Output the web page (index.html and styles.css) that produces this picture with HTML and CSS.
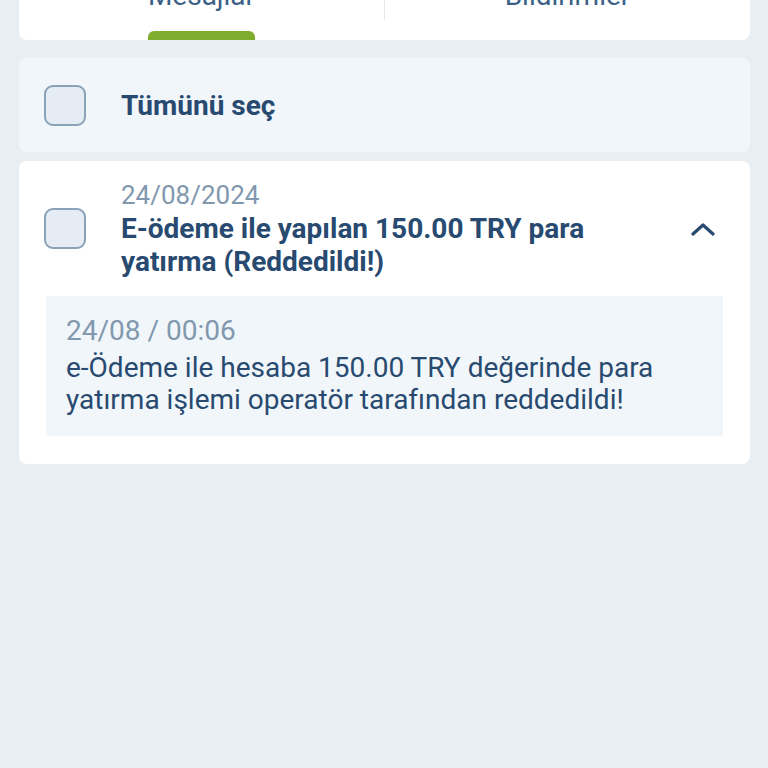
FILE: index.html
```html
<!DOCTYPE html>
<html lang="tr">
<head>
    <meta charset="UTF-8">
    <meta name="viewport" content="width=device-width, initial-scale=1.0">
    <title>Mesajlar</title>
    <link rel="stylesheet" href="styles.css">
</head>
<body>
    <div class="page">
        <!-- sekmeler -->
        <nav class="tabs">
            <div class="tab active">
                <span class="tab-label">Mesajlar</span>
                <span class="tab-bar"></span>
            </div>
            <div class="tab-divider"></div>
            <div class="tab">
                <span class="tab-label">Bildirimler</span>
            </div>
        </nav>

        <section class="select-all">
            <span class="check"></span>
            <span class="select-label">Tümünü seç</span>
        </section>

        <section class="message">
            <div class="message-head">
                <span class="check"></span>
                <div class="message-info">
                    <div class="message-date">24/08/2024</div>
                    <div class="message-title">E-ödeme ile yapılan 150.00 TRY para yatırma (Reddedildi!)</div>
                </div>
                <svg class="chevron" width="24" height="14" viewBox="0 0 24 14">
                    <path d="M2 12 L12 3 L22 12" fill="none" stroke="#284a70" stroke-width="3.2" stroke-linecap="round" stroke-linejoin="round"/>
                </svg>
            </div>
            <div class="message-body">
                <div class="body-time">24/08 / 00:06</div>
                <p class="body-text">e-Ödeme ile hesaba 150.00 TRY değerinde para yatırma işlemi operatör tarafından reddedildi!</p>
            </div>
        </section>
    </div>
</body>
</html>
```

FILE: styles.css
```css
body {
    margin: 0;
    padding: 0;
    background-color: #e9eef2;
    font-family: Roboto, "Noto Sans", Arial, sans-serif;
    color: #284a70;
}
.page {
    padding: 0 18px 0 19px;
}
.tabs {
    display: flex;
    height: 40px;
    background: #fff;
    border-radius: 0 0 8px 8px;
    overflow: hidden;
}
.tab {
    flex: 1;
    display: flex;
    flex-direction: column;
    align-items: center;
    justify-content: space-between;
}
.tab-label {
    margin-top: -20px;
    font-size: 28px;
    line-height: 32px;
    color: #3b5f87;
}
.tab-bar {
    width: 107px;
    height: 9px;
    background: #7fad2e;
    border-radius: 6px 6px 0 0;
}
.tab-divider {
    width: 1px;
    height: 20px;
    background: #e3e8ec;
}
.select-all {
    display: flex;
    align-items: center;
    height: 94px;
    margin-top: 18px;
    padding-left: 25px;
    background: #f1f6fa;
    border-radius: 8px;
}
.check {
    flex: none;
    box-sizing: border-box;
    width: 42px;
    height: 41px;
    border: 2px solid #8aa1b7;
    border-radius: 9px;
    background: #e5ecf3;
}
.select-label {
    margin-left: 35px;
    font-size: 28px;
    font-weight: bold;
}
.message {
    margin-top: 9px;
    padding: 18px 27px 28px;
    background: #fff;
    border-radius: 8px;
}
.message-head {
    display: flex;
    align-items: center;
    padding-right: 8px;
}
.message-head .check {
    margin-left: -2px;
}
.message-info {
    flex: 1;
    margin-left: 35px;
    padding-right: 50px;
}
.message-date {
    font-size: 26px;
    line-height: 33px;
    color: #8198ae;
}
.message-title {
    font-size: 28px;
    line-height: 33px;
    font-weight: bold;
}
.chevron {
    flex: none;
}
.message-body {
    margin-top: 18px;
    padding: 19px 20px 20px;
    background: #f1f6fa;
}
.body-time {
    font-size: 28px;
    line-height: 32px;
    color: #8198ae;
}
.body-text {
    margin: 5px 0 0;
    font-size: 28px;
    line-height: 32px;
}
```
